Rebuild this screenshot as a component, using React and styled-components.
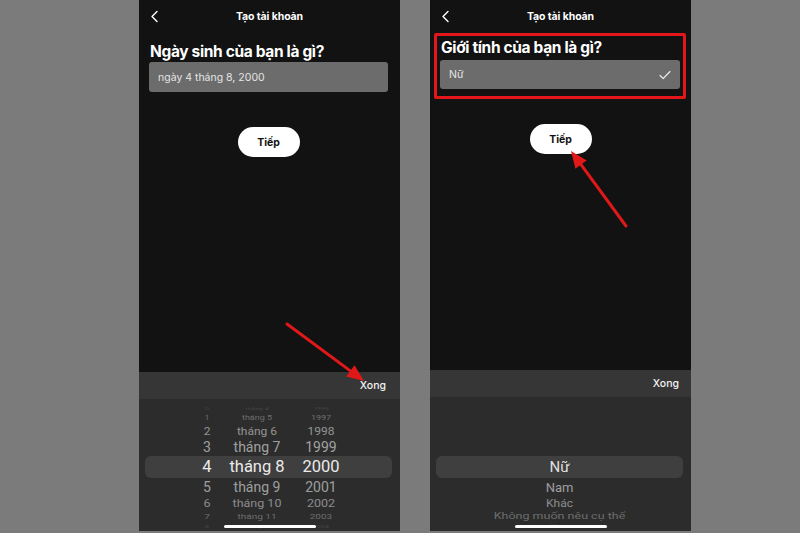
import React from 'react'
import styled, { createGlobalStyle } from 'styled-components'

const GlobalStyle = createGlobalStyle`
  html, body {
    margin: 0;
    padding: 0;
    background: #7b7b7b;
  }
  body {
    font-family: Inter, "Noto Sans", sans-serif;
  }
`

const Stage = styled.div`
  position: relative;
  width: 800px;
  height: 533px;
  display: flex;
  gap: 30px;
  padding-left: 139px;
  box-sizing: border-box;
  overflow: hidden;
`

const Phone = styled.div`
  position: relative;
  width: 261px;
  height: 531px;
  background: #121212;
  display: flex;
  flex-direction: column;
  overflow: hidden;
  color: #fff;
`

const Header = styled.div`
  height: 32px;
  flex: none;
  display: flex;
  align-items: center;
  justify-content: center;
  position: relative;
  font-size: 10.5px;
  font-weight: 700;
  letter-spacing: -0.1px;
`

const Back = styled.svg`
  position: absolute;
  left: 11px;
  top: 10px;
`

const Form = styled.div`
  padding: ${p => p.$pad};
  display: flex;
  flex-direction: column;
`

const Frame = styled.div`
  margin: 1px 5px 0 4px;
  border: 3px solid #e3161c;
  border-radius: 2px;
  padding: 2px 3px 7px 3px;
  display: flex;
  flex-direction: column;
`

const Heading = styled.h1`
  margin: 0 0 ${p => p.$gap}px ${p => p.$indent}px;
  font-size: 15.5px;
  line-height: ${p => p.$lh}px;
  font-weight: 700;
  letter-spacing: -0.35px;
  color: #fff;
`

const Field = styled.div`
  height: ${p => p.$h}px;
  background: #6c6c6c;
  border-radius: 3px;
  display: flex;
  align-items: center;
  justify-content: space-between;
  padding: 0 9px;
  font-size: 10.5px;
  color: #e4e4e4;
`

const NextButton = styled.div`
  align-self: center;
  margin-top: ${p => p.$top}px;
  width: 62px;
  height: 30px;
  border-radius: 15px;
  background: #fff;
  color: #111;
  font-size: 10.5px;
  font-weight: 700;
  display: flex;
  align-items: center;
  justify-content: center;
`

const Spacer = styled.div`
  flex: 1;
`

const Sheet = styled.div`
  flex: none;
  height: ${p => p.$h}px;
  display: flex;
  flex-direction: column;
  background: #2c2c2c;
`

const Toolbar = styled.div`
  height: 27px;
  flex: none;
  background: #363636;
  display: flex;
  align-items: center;
  justify-content: flex-end;
  padding-right: ${p => p.$right}px;
  font-size: 10.5px;
  font-weight: 500;
  color: #f2f2f2;
`

const Wheel = styled.div`
  padding-top: ${p => p.$top}px;
  display: flex;
  flex-direction: column;
`

const WheelRow = styled.div`
  height: ${p => p.$h}px;
  margin: 0 8px 0 6px;
  border-radius: 6px;
  background: ${p => (p.$selected ? '#3f3f3f' : 'transparent')};
  display: grid;
  grid-template-columns: ${p => p.$cols};
  padding-left: ${p => p.$indent}px;
  align-items: center;
  justify-items: center;
  font-family: Roboto, "Noto Sans", sans-serif;
  font-size: ${p => p.$size}px;
  line-height: 1;
  color: ${p => `rgba(235,235,235,${p.$alpha})`};
  overflow: hidden;
  white-space: nowrap;

  span {
    display: inline-block;
    transform: scaleY(${p => p.$squash});
  }
`

const HomeBar = styled.div`
  position: absolute;
  left: 50%;
  bottom: 3px;
  width: 92px;
  height: 3px;
  margin-left: -46px;
  border-radius: 2px;
  background: #fff;
`

const Overlay = styled.svg`
  position: absolute;
  left: 0;
  top: 0;
  pointer-events: none;
`

const dateRows = [
  ['0', 'tháng 4', '1996', 6, 7, 0.15, 0.5],
  ['1', 'tháng 5', '1997', 12, 9, 0.35, 0.75],
  ['2', 'tháng 6', '1998', 14, 12, 0.55, 0.9],
  ['3', 'tháng 7', '1999', 18, 14, 0.62, 1],
  ['4', 'tháng 8', '2000', 22, 16.5, 1, 1, true],
  ['5', 'tháng 9', '2001', 17, 14, 0.6, 1],
  ['6', 'tháng 10', '2002', 16, 12.5, 0.5, 0.9],
  ['7', 'tháng 11', '2003', 12, 10, 0.35, 0.75],
  ['8', 'tháng 12', '2004', 8, 7, 0.15, 0.5],
]

const genderRows = [
  ['Nữ', 22, 15, 0.95, 1, true],
  ['Nam', 18, 13, 0.6, 1],
  ['Khác', 14, 12, 0.5, 0.95],
  ['Không muốn nêu cụ thể', 12, 12.5, 0.35, 0.72],
  ['Khác', 8, 8, 0.15, 0.5],
]

const Chevron = () => (
  <Back width="9" height="13" viewBox="0 0 9 13">
    <path d="M7 1.5 L2 6.5 L7 11.5" fill="none" stroke="#fff" strokeWidth="1.4" strokeLinecap="round" strokeLinejoin="round" />
  </Back>
)

const Check = () => (
  <svg width="12" height="10" viewBox="0 0 12 10">
    <path d="M1 5.5 L4.2 8.5 L11 1.5" fill="none" stroke="#e8e8e8" strokeWidth="1.2" strokeLinecap="round" strokeLinejoin="round" />
  </svg>
)

const Arrow = ({ x1, y1, x2, y2 }) => {
  const a = Math.atan2(y2 - y1, x2 - x1)
  const len = 17
  const wide = 7
  const bx = x2 - len * Math.cos(a)
  const by = y2 - len * Math.sin(a)
  const px = -Math.sin(a) * wide
  const py = Math.cos(a) * wide
  return (
    <g>
      <line x1={x1} y1={y1} x2={bx} y2={by} stroke="#e01818" strokeWidth="3" strokeLinecap="round" />
      <polygon points={`${x2},${y2} ${bx + px},${by + py} ${bx - px},${by - py}`} fill="#e01818" />
    </g>
  )
}

export default function App() {
  return (
    <>
      <GlobalStyle />
      <Stage>
        <Phone>
          <Header>
            <Chevron />
            Tạo tài khoản
          </Header>
          <Form $pad="10px 12px 0 10px">
            <Heading $gap={0} $indent={1} $lh={20}>Ngày sinh của bạn là gì?</Heading>
            <Field $h={30}>ngày 4 tháng 8, 2000</Field>
            <NextButton $top={35}>Tiếp</NextButton>
          </Form>
          <Spacer />
          <Sheet $h={159}>
            <Toolbar $right={14}>Xong</Toolbar>
            <Wheel $top={7}>
              {dateRows.map(([d, m, y, h, size, alpha, squash, sel]) => (
                <WheelRow
                  key={d}
                  $h={h}
                  $size={size}
                  $alpha={alpha}
                  $squash={squash}
                  $selected={sel}
                  $cols="44px 56px 72px"
                  $indent={40}
                >
                  <span>{d}</span>
                  <span>{m}</span>
                  <span>{y}</span>
                </WheelRow>
              ))}
            </Wheel>
          </Sheet>
          <HomeBar />
        </Phone>

        <Phone>
          <Header>
            <Chevron />
            Tạo tài khoản
          </Header>
          <Frame>
            <Heading $gap={3} $indent={1} $lh={19}>Giới tính của bạn là gì?</Heading>
            <Field $h={29}>
              Nữ
              <Check />
            </Field>
          </Frame>
          <NextButton $top={25}>Tiếp</NextButton>
          <Spacer />
          <Sheet $h={161}>
            <Toolbar $right={12}>Xong</Toolbar>
            <Wheel $top={59}>
              {genderRows.map(([label, h, size, alpha, squash, sel], i) => (
                <WheelRow
                  key={i}
                  $h={h}
                  $size={size}
                  $alpha={alpha}
                  $squash={squash}
                  $selected={sel}
                  $cols="1fr"
                  $indent={0}
                >
                  <span>{label}</span>
                </WheelRow>
              ))}
            </Wheel>
          </Sheet>
          <HomeBar />
        </Phone>

        <Overlay width="800" height="533" viewBox="0 0 800 533">
          <Arrow x1={287} y1={324} x2={364} y2={381} />
          <Arrow x1={626} y1={226} x2={571} y2={151} />
        </Overlay>
      </Stage>
    </>
  )
}
